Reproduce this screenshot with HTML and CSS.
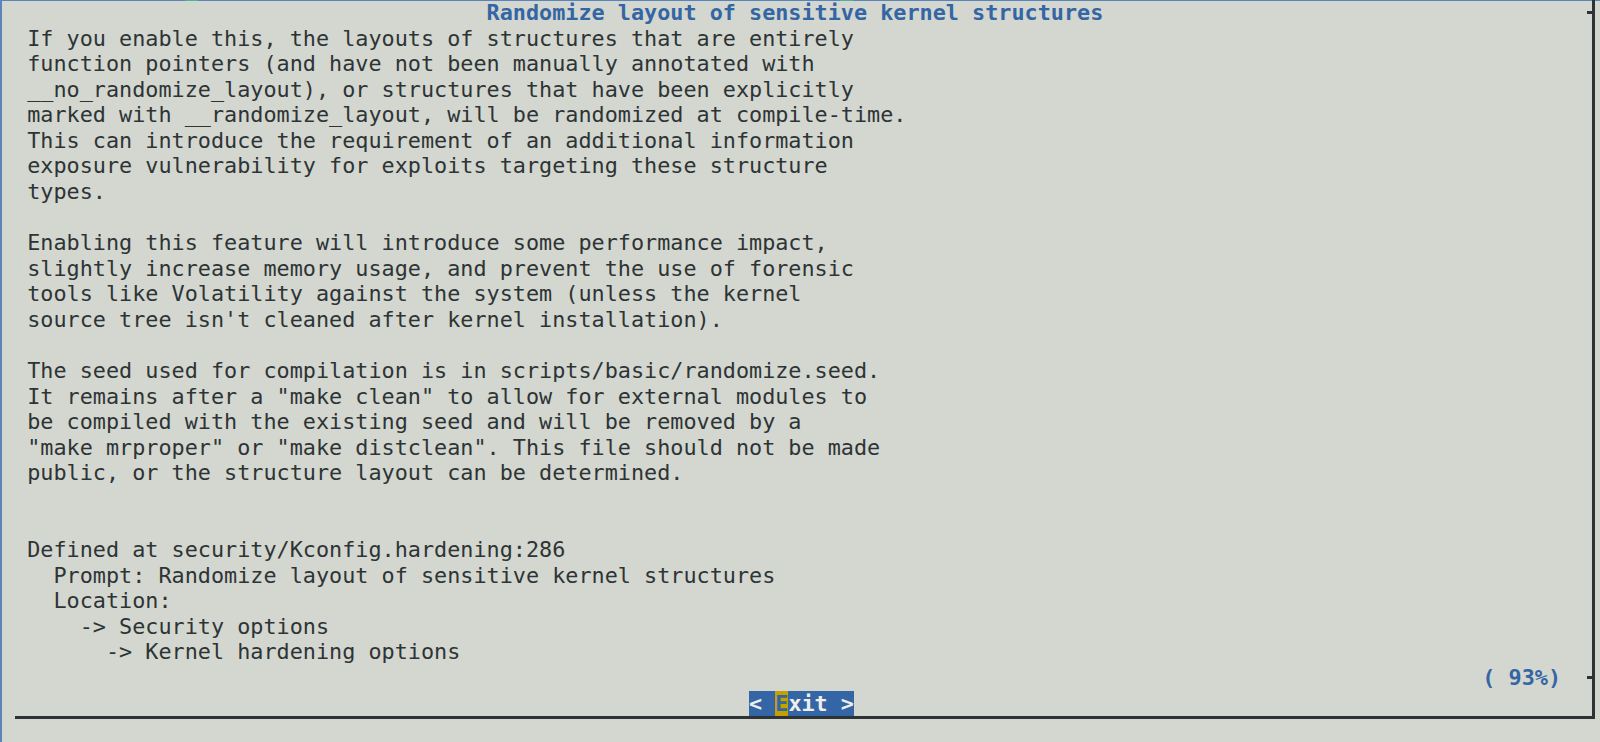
FILE: index.html
```html
<!DOCTYPE html>
<html lang="en">
<head>
<meta charset="utf-8">
<title>Randomize layout of sensitive kernel structures</title>
<link rel="stylesheet" href="styles.css">
</head>
<body>
<span class="mark mark-a"></span>
<span class="mark mark-b"></span>
<div class="frame">
  <div class="row title-row"><span class="title">Randomize layout of sensitive kernel structures</span><span class="fill"></span><span class="tick"></span></div>
  <div class="row">If you enable this, the layouts of structures that are entirely</div>
  <div class="row">function pointers (and have not been manually annotated with</div>
  <div class="row">__no_randomize_layout), or structures that have been explicitly</div>
  <div class="row">marked with __randomize_layout, will be randomized at compile-time.</div>
  <div class="row">This can introduce the requirement of an additional information</div>
  <div class="row">exposure vulnerability for exploits targeting these structure</div>
  <div class="row">types.</div>
  <div class="row"></div>
  <div class="row">Enabling this feature will introduce some performance impact,</div>
  <div class="row">slightly increase memory usage, and prevent the use of forensic</div>
  <div class="row">tools like Volatility against the system (unless the kernel</div>
  <div class="row">source tree isn't cleaned after kernel installation).</div>
  <div class="row"></div>
  <div class="row">The seed used for compilation is in scripts/basic/randomize.seed.</div>
  <div class="row">It remains after a "make clean" to allow for external modules to</div>
  <div class="row">be compiled with the existing seed and will be removed by a</div>
  <div class="row">"make mrproper" or "make distclean". This file should not be made</div>
  <div class="row">public, or the structure layout can be determined.</div>
  <div class="row"></div>
  <div class="row"></div>
  <div class="row">Defined at security/Kconfig.hardening:286</div>
  <div class="row">  Prompt: Randomize layout of sensitive kernel structures</div>
  <div class="row">  Location:</div>
  <div class="row">    -&gt; Security options</div>
  <div class="row">      -&gt; Kernel hardening options</div>
  <div class="row percent-row"><span class="percent">( 93%)</span><span class="gap"></span><span class="tick"></span></div>
  <div class="row button-row"><span class="btn">&lt; <span class="hot">E</span>xit &gt;</span></div>
</div>
</body>
</html>
```
FILE: styles.css
```css
html {
  background: #d3d7cf;
}

body {
  margin: 0;
  width: 1600px;
  height: 742px;
  overflow: hidden;
  position: relative;
  background: #d3d7cf;
  color: #2e3436;
  font-family: "DejaVu Sans Mono", monospace;
  font-size: 21.8px;
  box-shadow: inset 2px 1px 0 0 #5a85ba;
}

.mark {
  position: absolute;
  top: 0;
  height: 1px;
  background: #4cb0a2;
}

.mark-a {
  left: 185px;
  width: 13px;
}

.mark-b {
  left: 840px;
  width: 13px;
}

.frame {
  box-sizing: border-box;
  margin: 11.3px 0 0 15px;
  width: 1580.3px;
  height: 719px;
  padding-left: 12.25px;
  border-right: 3px solid #2e3436;
  border-bottom: 3px solid #2e3436;
}

.row {
  height: 25.586px;
  line-height: 25.586px;
  white-space: pre;
}

.title-row {
  margin-top: -11.3px;
  display: flex;
  align-items: center;
}

.title {
  margin-left: 35ch;
  color: #3465a4;
  font-weight: bold;
}

.fill {
  flex: 1;
}

.tick {
  width: 5px;
  height: 3px;
  background: #2e3436;
}

.percent-row {
  display: flex;
  justify-content: flex-end;
  align-items: center;
}

.percent {
  color: #3465a4;
  font-weight: bold;
}

.gap {
  width: 2ch;
}

.button-row {
  display: flex;
}

.btn {
  display: inline-block;
  margin-left: 55ch;
  height: 25.586px;
  line-height: 25.586px;
  background: #3465a4;
  color: #eeeeec;
  font-weight: bold;
}

.hot {
  display: inline-block;
  height: 25.586px;
  background: #c4a000;
  color: #3465a4;
}
```
